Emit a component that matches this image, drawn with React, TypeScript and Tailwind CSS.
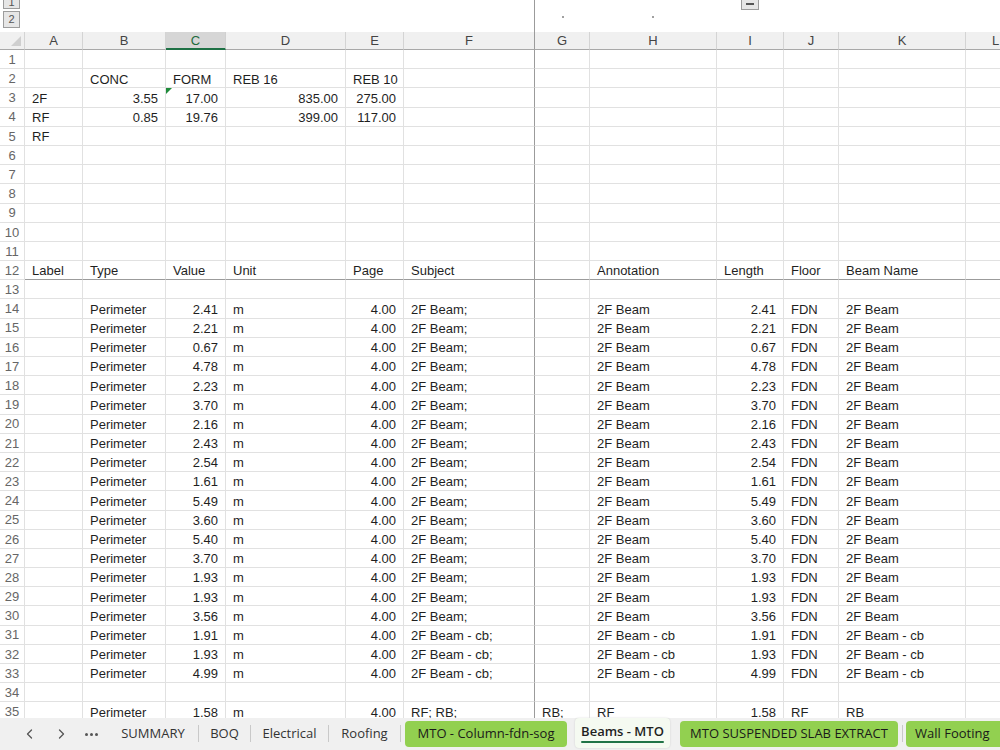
import React from 'react';

const colWidths = [58, 83, 60, 120, 58, 131, 55, 127, 67, 55, 127, 60];
const colLetters = ['A', 'B', 'C', 'D', 'E', 'F', 'G', 'H', 'I', 'J', 'K', 'L'];

const beamLengths = [
  '2.41', '2.21', '0.67', '4.78', '2.23', '3.70', '2.16', '2.43', '2.54', '1.61',
  '5.49', '3.60', '5.40', '3.70', '1.93', '1.93', '3.56', '1.91', '1.93', '4.99',
];

const buildRows = () => {
  const rows: Record<number, string[]> = {
    2: ['', 'CONC', 'FORM', 'REB 16', 'REB 10'],
    3: ['2F', '3.55', '17.00', '835.00', '275.00'],
    4: ['RF', '0.85', '19.76', '399.00', '117.00'],
    5: ['RF'],
    12: ['Label', 'Type', 'Value', 'Unit', 'Page', 'Subject', '', 'Annotation', 'Length', 'Floor', 'Beam Name'],
    35: ['', 'Perimeter', '1.58', 'm', '4.00', 'RF; RB;', 'RB;', 'RF', '1.58', 'RF', 'RB'],
  };
  beamLengths.forEach((v, i) => {
    const name = i >= 17 ? '2F Beam - cb' : '2F Beam';
    rows[14 + i] = ['', 'Perimeter', v, 'm', '4.00', name + ';', '', name, v, 'FDN', name];
  });
  return rows;
};

const sheetRows = buildRows();
const rowNums = Array.from({ length: 36 }, (_, i) => i + 1);

const Chevron = ({ dir }: { dir: 'l' | 'r' }) => (
  <svg width="16" height="16" viewBox="0 0 16 16" fill="none">
    <path
      d={dir === 'l' ? 'M9.5 4 L5.5 8 L9.5 12' : 'M6.5 4 L10.5 8 L6.5 12'}
      stroke="#555"
      strokeWidth="1.3"
      strokeLinecap="round"
      strokeLinejoin="round"
    />
  </svg>
);

const Sep = () => <div className="w-px h-[17px] bg-[#c9c9c9] shrink-0" />;

const App: React.FC = () => {
  return (
    <div className="w-[1000px] h-[750px] overflow-hidden bg-white flex flex-col font-['Liberation_Sans',Arial,sans-serif] text-[13px] text-[#1f1f1f]">
      {/* outline area */}
      <div className="relative h-[32px] shrink-0">
        <div className="absolute left-[3px] top-[-5px] w-[17px] h-[14px] bg-[#e6e6e6] border border-[#9c9c9c] text-[11px] leading-[12px] text-[#555] flex items-end justify-center">1</div>
        <div className="absolute left-[3px] top-[11px] w-[17px] h-[17px] bg-[#e6e6e6] border border-[#9c9c9c] text-[11px] text-[#555] flex items-center justify-center">2</div>
        <div className="absolute left-[741px] top-[-6px] w-[18px] h-[16px] bg-[#e6e6e6] border border-[#9c9c9c] flex items-end justify-center pb-[4px]">
          <div className="w-[8px] h-[2px] bg-[#555]" />
        </div>
        <div className="absolute left-[562px] top-[16px] w-[2px] h-[2px] bg-[#a0a0a0]" />
        <div className="absolute left-[652px] top-[16px] w-[2px] h-[2px] bg-[#a0a0a0]" />
        <div className="absolute left-[534px] top-0 w-px h-full bg-[#9b9b9b]" />
      </div>

      {/* sheet */}
      <div className="flex-1 overflow-hidden">
        {/* column header */}
        <div className="flex h-[18px]">
          <div className="w-[25px] shrink-0 h-full bg-[#f0f0f0] border-r border-b border-[#d4d4d4] border-b-[#a8a8a8] flex items-end justify-end pr-[3px] pb-[3px]">
            <svg width="10" height="10" viewBox="0 0 10 10">
              <polygon points="10,0 10,10 0,10" fill="#cfcfcf" />
            </svg>
          </div>
          {colLetters.map((l, i) => (
            <div
              key={l}
              className={`shrink-0 h-full flex items-center justify-center pt-px border-r ${
                i === 2
                  ? 'bg-[#d6d6d6] text-[#1d6b3c] border-b-2 border-[#d0d0d0] border-b-[#1e7145]'
                  : i === 5
                  ? 'bg-[#f0f0f0] text-[#444] border-b border-[#9b9b9b] border-b-[#a8a8a8]'
                  : 'bg-[#f0f0f0] text-[#444] border-b border-[#d4d4d4] border-b-[#a8a8a8]'
              }`}
              style={{ width: colWidths[i] }}
            >
              {l}
            </div>
          ))}
        </div>

        {rowNums.map((r) => {
          const data = sheetRows[r] || [];
          const frozen = r === 12;
          return (
            <div key={r} className="flex h-[19.2px]">
              <div className="w-[25px] shrink-0 h-full border-r border-b border-[#e1e1e1] text-[#666] pt-px flex items-center justify-center">
                {r}
              </div>
              {colWidths.map((w, i) => {
                const text = data[i] || '';
                const num = /^\d+\.\d+$/.test(text);
                const borderR = i === 5 ? 'border-r-[#9b9b9b]' : 'border-r-[#e1e1e1]';
                const borderB = frozen ? 'border-b-[#9b9b9b]' : 'border-b-[#e1e1e1]';
                return (
                  <div
                    key={i}
                    className={`relative shrink-0 h-full border-r border-b ${borderR} ${borderB} pt-[2px] flex items-center whitespace-nowrap ${
                      num ? 'justify-end pr-[7px]' : 'pl-[7px]'
                    }`}
                    style={{ width: w }}
                  >
                    {r === 3 && i === 2 && (
                      <svg className="absolute left-0 top-0" width="6" height="6" viewBox="0 0 6 6">
                        <polygon points="0,0 6,0 0,6" fill="#1e8b3a" />
                      </svg>
                    )}
                    {text}
                  </div>
                );
              })}
            </div>
          );
        })}
      </div>

      {/* sheet tabs */}
      <div className="h-[32px] shrink-0 bg-[#f0f0f0] flex items-start text-[#333] whitespace-nowrap font-['Open_Sans','Liberation_Sans',sans-serif] text-[13px]">
        <div className="shrink-0 ml-[22px] mt-[8px] w-[16px] flex justify-center"><Chevron dir="l" /></div>
        <div className="shrink-0 ml-[15px] mt-[8px] w-[16px] flex justify-center"><Chevron dir="r" /></div>
        <div className="shrink-0 ml-[14px] mt-[15px] w-[16px] flex justify-center gap-[2px]">
          <div className="w-[3px] h-[3px] rounded-full bg-[#555]" />
          <div className="w-[3px] h-[3px] rounded-full bg-[#555]" />
          <div className="w-[3px] h-[3px] rounded-full bg-[#555]" />
        </div>
        <div className="shrink-0 ml-[9px] w-[90px] h-[31px] flex items-center justify-center">SUMMARY</div>
        <div className="mt-[7px]"><Sep /></div>
        <div className="shrink-0 w-[51px] h-[31px] flex items-center justify-center">BOQ</div>
        <div className="mt-[7px]"><Sep /></div>
        <div className="shrink-0 w-[77px] h-[31px] flex items-center justify-center">Electrical</div>
        <div className="mt-[7px]"><Sep /></div>
        <div className="shrink-0 w-[71px] h-[31px] flex items-center justify-center">Roofing</div>
        <div className="mt-[7px]"><Sep /></div>
        <div className="shrink-0 ml-[4px] w-[162px] h-[26px] mt-[3px] rounded-[4px] bg-[#92d050] text-[#1a1a1a] flex items-center justify-center">
          MTO - Column-fdn-sog
        </div>
        <div className="shrink-0 ml-[8px] w-[95px] h-[30px] mt-0 rounded-[4px] bg-[#f5faf1] shadow-[0_0_2px_rgba(0,0,0,0.15)] flex flex-col items-center pt-[4px]">
          <span className="font-semibold text-[#1f1f1f] leading-[18px]">Beams - MTO</span>
          <div className="w-[83px] h-[2px] bg-[#217346] rounded-full mt-px" />
        </div>
        <div className="shrink-0 ml-[10px] w-[218px] h-[26px] mt-[3px] rounded-[4px] bg-[#92d050] text-[#1a1a1a] flex items-center justify-center">
          MTO SUSPENDED SLAB EXTRACT
        </div>
        <div className="shrink-0 ml-[4px] mt-[7px]"><Sep /></div>
        <div className="shrink-0 ml-[3px] w-[100px] h-[26px] mt-[3px] rounded-[4px] bg-[#92d050] text-[#1a1a1a] flex items-center pl-[9px]">
          Wall Footing
        </div>
      </div>
    </div>
  );
};

export default App;
